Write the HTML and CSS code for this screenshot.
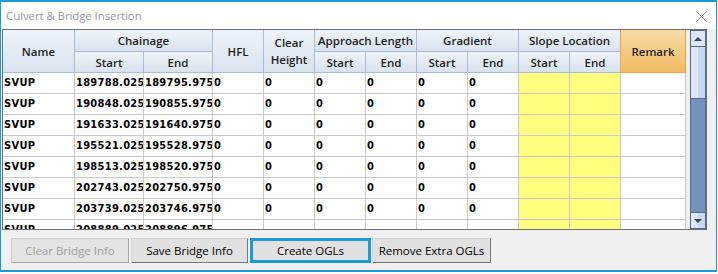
FILE: index.html
```html
<!DOCTYPE html>
<html>
<head>
<meta charset="utf-8">
<link rel="stylesheet" href="styles.css">
</head>
<body>
<div class="window">
  <div class="titlebar">
    <span class="title">Culvert &amp; Bridge Insertion</span>
    <svg class="close" width="11" height="11" viewBox="0 0 11 11"><path d="M0.5 0.5 L10.5 10.5 M10.5 0.5 L0.5 10.5" stroke="#8a8a8a" stroke-width="1" fill="none"/></svg>
  </div>
  <div class="content">
    <div class="gridframe">
      <div class="gridview">
        <div class="grid">
          <div class="hc r2">Name</div>
          <div class="hc c2">Chainage</div>
          <div class="hc r2">HFL</div>
          <div class="hc r2 two">Clear<br>Height</div>
          <div class="hc c2">Approach Length</div>
          <div class="hc c2">Gradient</div>
          <div class="hc c2">Slope Location</div>
          <div class="hc r2 remark">Remark</div>
          <div class="hc">Start</div><div class="hc">End</div>
          <div class="hc">Start</div><div class="hc">End</div>
          <div class="hc">Start</div><div class="hc">End</div>
          <div class="hc">Start</div><div class="hc">End</div>

          <div class="dc">SVUP</div><div class="dc">189788.025</div><div class="dc">189795.975</div><div class="dc">0</div><div class="dc">0</div><div class="dc">0</div><div class="dc">0</div><div class="dc">0</div><div class="dc">0</div><div class="dc y"></div><div class="dc y"></div><div class="dc"></div>
          <div class="dc">SVUP</div><div class="dc">190848.025</div><div class="dc">190855.975</div><div class="dc">0</div><div class="dc">0</div><div class="dc">0</div><div class="dc">0</div><div class="dc">0</div><div class="dc">0</div><div class="dc y"></div><div class="dc y"></div><div class="dc"></div>
          <div class="dc">SVUP</div><div class="dc">191633.025</div><div class="dc">191640.975</div><div class="dc">0</div><div class="dc">0</div><div class="dc">0</div><div class="dc">0</div><div class="dc">0</div><div class="dc">0</div><div class="dc y"></div><div class="dc y"></div><div class="dc"></div>
          <div class="dc">SVUP</div><div class="dc">195521.025</div><div class="dc">195528.975</div><div class="dc">0</div><div class="dc">0</div><div class="dc">0</div><div class="dc">0</div><div class="dc">0</div><div class="dc">0</div><div class="dc y"></div><div class="dc y"></div><div class="dc"></div>
          <div class="dc">SVUP</div><div class="dc">198513.025</div><div class="dc">198520.975</div><div class="dc">0</div><div class="dc">0</div><div class="dc">0</div><div class="dc">0</div><div class="dc">0</div><div class="dc">0</div><div class="dc y"></div><div class="dc y"></div><div class="dc"></div>
          <div class="dc">SVUP</div><div class="dc">202743.025</div><div class="dc">202750.975</div><div class="dc">0</div><div class="dc">0</div><div class="dc">0</div><div class="dc">0</div><div class="dc">0</div><div class="dc">0</div><div class="dc y"></div><div class="dc y"></div><div class="dc"></div>
          <div class="dc">SVUP</div><div class="dc">203739.025</div><div class="dc">203746.975</div><div class="dc">0</div><div class="dc">0</div><div class="dc">0</div><div class="dc">0</div><div class="dc">0</div><div class="dc">0</div><div class="dc y"></div><div class="dc y"></div><div class="dc"></div>
          <div class="dc">SVUP</div><div class="dc">208889.025</div><div class="dc">208896.975</div><div class="dc"></div><div class="dc"></div><div class="dc"></div><div class="dc"></div><div class="dc"></div><div class="dc"></div><div class="dc y"></div><div class="dc y"></div><div class="dc"></div>
        </div>
      </div>
      <div class="scrollbar">
        <div class="sb-btn up"><svg width="8" height="4" viewBox="0 0 8 4"><polygon points="0,4 8,4 4,0" fill="#3a4560"/></svg></div>
        <div class="sb-thumb"></div>
        <div class="sb-track"></div>
        <div class="sb-btn down"><svg width="8" height="4" viewBox="0 0 8 4"><polygon points="0,0 8,0 4,4" fill="#3a4560"/></svg></div>
      </div>
    </div>
    <div class="buttons">
      <div class="btn disabled w-clear">Clear Bridge Info</div>
      <div class="btn w-save">Save Bridge Info</div>
      <div class="btn focused w-create">Create OGLs</div>
      <div class="btn w-remove">Remove Extra OGLs</div>
    </div>
  </div>
</div>
</body>
</html>
```
FILE: styles.css
```css
body {
  margin: 0;
  background: #ffffff;
}
.window {
  box-sizing: border-box;
  width: 717px;
  height: 272px;
  border: 1px solid #1a9ad6;
  border-top-width: 2px;
  border-bottom-width: 2px;
  background: #f0f0f0;
  display: flex;
  flex-direction: column;
}
.titlebar {
  flex: none;
  height: 27px;
  background: #ffffff;
  display: flex;
  align-items: center;
  justify-content: space-between;
  padding: 0 9px 0 5px;
}
.title {
  font-family: "Open Sans", "Noto Sans", sans-serif;
  font-size: 11.5px;
  letter-spacing: -0.1px;
  color: #9a9a9a;
}
.close {
  display: block;
  margin-top: 1px;
}
.content {
  padding-left: 1px;
}
.gridframe {
  box-sizing: border-box;
  width: 705px;
  height: 201px;
  border: 1px solid #707070;
  display: flex;
}
.gridview {
  width: 687px;
  height: 199px;
  overflow: hidden;
  background: #f0f0f0;
}
.grid {
  display: grid;
  grid-template-columns: 72px 69px 69px repeat(8, 51px) 65px;
  grid-template-rows: 22px 21px repeat(8, 21px);
}
.hc {
  box-sizing: border-box;
  border-right: 1px solid #a9bdd6;
  border-bottom: 1px solid #a9bdd6;
  background: linear-gradient(#eef3f9, #d9e3ef);
  font-family: "Open Sans", "Noto Sans", sans-serif;
  font-size: 11.5px;
  font-weight: 600;
  color: #1e1e1e;
  display: flex;
  align-items: center;
  justify-content: center;
  text-align: center;
  white-space: nowrap;
  overflow: hidden;
}
.r2 {
  grid-row: span 2;
}
.c2 {
  grid-column: span 2;
}
.two {
  line-height: 17px;
}
.remark {
  position: relative;
  z-index: 1;
  margin-left: -1px;
  border: 1px solid #f5a23e;
  border-top: none;
  background: linear-gradient(#f8dba6, #f0bc64);
}
.dc {
  box-sizing: border-box;
  border-right: 1px solid #c9c9c9;
  border-bottom: 1px solid #c9c9c9;
  background: #ffffff;
  font-family: "DejaVu Sans Condensed", "DejaVu Sans", sans-serif;
  font-stretch: condensed;
  font-weight: bold;
  font-size: 11px;
  letter-spacing: 0.3px;
  line-height: 20px;
  color: #000000;
  padding-left: 1px;
  white-space: nowrap;
  overflow: hidden;
}
.dc.y {
  background: #ffff80;
}
.scrollbar {
  box-sizing: border-box;
  width: 16px;
  height: 199px;
  border: 1px solid #56698f;
  background: #7393bd;
  display: flex;
  flex-direction: column;
}
.sb-btn {
  flex: none;
  height: 15px;
  background: #dce6f6;
  display: flex;
  align-items: center;
  justify-content: center;
}
.sb-btn.up {
  border-bottom: 1px solid #56698f;
}
.sb-btn.down {
  border-top: 1px solid #56698f;
  background: linear-gradient(to right, #dde7f7 50%, #c8d8f1 50%);
}
.sb-thumb {
  flex: none;
  height: 51px;
  border-bottom: 1px solid #56698f;
  background: linear-gradient(to right, #dde7f7 50%, #c6d7f1 50%);
}
.sb-track {
  flex: 1;
}
.buttons {
  display: flex;
  padding: 8px 0 0 9px;
}
.btn {
  box-sizing: border-box;
  height: 25px;
  background: #e1e1e1;
  border: 1px solid #d4d4d4;
  border-right-color: #7a7a7a;
  border-bottom-color: #7a7a7a;
  font-family: "Open Sans", "Noto Sans", sans-serif;
  font-size: 11.5px;
  color: #000000;
  display: flex;
  align-items: center;
  justify-content: center;
  white-space: nowrap;
}
.btn.disabled {
  color: #a0a0a0;
  background: #e4e4e4;
  border-color: #cfcfcf;
  border-right-color: #a8a8a8;
  border-bottom-color: #a8a8a8;
}
.btn.focused {
  border: 3px solid #1a9ad6;
}
.w-clear {
  width: 118px;
  margin-right: 2px;
}
.w-save {
  width: 117px;
  margin-right: 2px;
}
.w-create {
  width: 121px;
  margin-right: 1px;
}
.w-remove {
  width: 119px;
}
```
